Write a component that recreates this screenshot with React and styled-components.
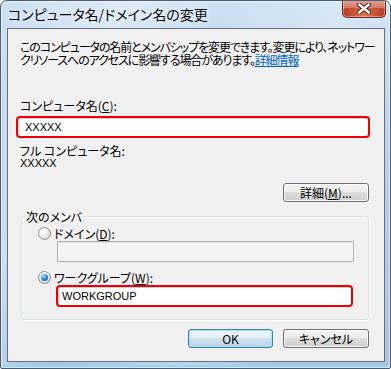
import React from "react";
import styled, { createGlobalStyle } from "styled-components";

const GlobalStyle = createGlobalStyle`
  html, body {
    margin: 0;
    padding: 0;
    background: #ffffff;
  }
  body {
    width: 391px;
    height: 369px;
    overflow: hidden;
    font-family: "Noto Sans CJK JP", "Liberation Sans", sans-serif;
    font-feature-settings: "palt";
  }
`;

const Window = styled.div`
  box-sizing: border-box;
  width: 391px;
  height: 369px;
  display: flex;
  flex-direction: column;
  border: 1px solid #4b5c6e;
  border-radius: 7px 7px 2px 2px;
  background: linear-gradient(
      115deg,
      rgba(255, 255, 255, 0) 0%,
      rgba(255, 255, 255, 0.35) 22%,
      rgba(255, 255, 255, 0) 40%,
      rgba(255, 255, 255, 0.25) 62%,
      rgba(255, 255, 255, 0) 80%
    ),
    linear-gradient(180deg, #cde0f2 0%, #b9d1ea 40%, #a9c5e3 100%);
  box-shadow: inset 0 0 0 1px rgba(255, 255, 255, 0.55),
    inset 0 -2px 0 #8fd6f2;
  overflow: hidden;
`;

const TitleBar = styled.div`
  height: 27px;
  flex: none;
  display: flex;
  align-items: flex-start;
  padding-left: 7px;
`;

const Title = styled.div`
  margin-top: 4px;
  font-size: 14px;
  line-height: 18px;
  color: #0b0b0b;
  white-space: nowrap;
  text-shadow: 0 0 6px rgba(255, 255, 255, 0.9);
`;

const CloseButton = styled.div`
  margin-left: auto;
  margin-right: 4px;
  margin-top: -1px;
  width: 44px;
  height: 18px;
  box-sizing: border-box;
  display: flex;
  align-items: center;
  justify-content: center;
  border: 1px solid #6b2a1d;
  border-top: none;
  border-radius: 0 0 5px 5px;
  background: radial-gradient(
      ellipse at 50% 100%,
      rgba(255, 170, 120, 0.6) 0%,
      rgba(255, 170, 120, 0) 60%
    ),
    linear-gradient(180deg, #e4a597 0%, #d37863 45%, #c34a30 50%, #b8391f 100%);
  box-shadow: inset 0 0 0 1px rgba(255, 255, 255, 0.35);
`;

const Client = styled.div`
  flex: 1;
  margin: 0 5px 6px 6px;
  border: 1px solid #5f7182;
  background: #f0f0f0;
  display: flex;
  flex-direction: column;
  font-size: 12px;
  color: #000;
`;

const Description = styled.p`
  margin: 11px 0 0 12px;
  line-height: 13px;
  letter-spacing: -1.1px;
  white-space: nowrap;
`;

const Link = styled.a`
  color: #0066cc;
  text-decoration: underline;
`;

const Label = styled.div`
  margin: ${(p) => p.$top}px 0 0 12px;
  line-height: 13px;
  white-space: nowrap;
`;

const Value = styled.div`
  margin-left: 12px;
  line-height: 13px;
  font-family: "Liberation Sans", sans-serif;
  font-size: 11px;
`;

const Field = styled.div`
  box-sizing: border-box;
  height: ${(p) => p.$h}px;
  width: ${(p) => p.$w}px;
  margin: ${(p) => p.$top}px 0 0 ${(p) => p.$left}px;
  display: flex;
  align-items: center;
  padding-left: ${(p) => p.$pad}px;
  font-family: "Liberation Sans", sans-serif;
  font-size: 11px;
  border-radius: ${(p) => (p.$marked ? 4 : 1)}px;
  border: ${(p) =>
    p.$marked ? "2px solid #f20000" : "1px solid #aeb3b8"};
  background: ${(p) => (p.$marked ? "#ffffff" : "#f4f4f4")};
  box-shadow: ${(p) =>
    p.$marked ? "inset 1px 1px 0 #bcd0e3" : "inset 0 1px 0 #e3e3e3"};
`;

const ButtonRow = styled.div`
  display: flex;
  justify-content: flex-end;
  gap: 10px;
  margin: ${(p) => p.$top}px 15px 0 0;
`;

const Button = styled.div`
  box-sizing: border-box;
  width: ${(p) => p.$w}px;
  height: 19px;
  display: flex;
  align-items: center;
  justify-content: center;
  font-size: 12px;
  line-height: 1;
  border-radius: 3px;
  border: 1px solid ${(p) => (p.$default ? "#3c7fb1" : "#707070")};
  background: ${(p) =>
    p.$default
      ? "linear-gradient(180deg, #edf5fa 0%, #e2eef6 50%, #cfe2ee 50%, #bed6e6 100%)"
      : "linear-gradient(180deg, #f3f3f3 0%, #ebebeb 50%, #dddddd 50%, #cfcfcf 100%)"};
  box-shadow: inset 0 0 0 1px
    ${(p) => (p.$default ? "rgba(160, 220, 250, 0.9)" : "rgba(255, 255, 255, 0.8)")};
`;

const Group = styled.fieldset`
  margin: 8px 15px 0 13px;
  padding: 3px 0 12px 0;
  border: 1px solid #d5dfe5;
  border-radius: 3px;
  box-shadow: inset 1px 1px 0 #ffffff, 1px 1px 0 #ffffff;
`;

const Legend = styled.legend`
  margin-left: 3px;
  padding: 0 1px;
  line-height: 13px;
  font-size: 12px;
`;

const RadioRow = styled.div`
  display: flex;
  align-items: center;
  height: 15px;
  margin: ${(p) => p.$top}px 0 0 16px;
  gap: 3px;
  white-space: nowrap;
`;

const Radio = styled.span`
  box-sizing: border-box;
  width: 13px;
  height: 13px;
  border-radius: 50%;
  border: 1px solid #8f8f8f;
  display: flex;
  align-items: center;
  justify-content: center;
  background: radial-gradient(circle at 35% 30%, #ffffff 0%, #f1f1f1 40%, #c9c9c9 100%);

  &::after {
    content: "";
    display: ${(p) => (p.$checked ? "block" : "none")};
    width: 7px;
    height: 7px;
    border-radius: 50%;
    background: radial-gradient(circle at 35% 30%, #a5e6ff 0%, #2b8bd0 50%, #0a4c85 100%);
  }
`;

const Mnemonic = styled.span`
  text-decoration: underline;
`;

function CloseGlyph() {
  return (
    <svg width="16" height="11" viewBox="0 0 16 11">
      <path d="M3 1.5 L13 9.5 M13 1.5 L3 9.5" stroke="#3a1d18" strokeWidth="4.2" strokeLinecap="round" fill="none" />
      <path d="M3 1.5 L13 9.5 M13 1.5 L3 9.5" stroke="#ffffff" strokeWidth="2.4" strokeLinecap="round" fill="none" />
    </svg>
  );
}

export default function App() {
  return (
    <>
      <GlobalStyle />
      <Window>
        <TitleBar>
          <Title>コンピュータ名/ドメイン名の変更</Title>
          <CloseButton>
            <CloseGlyph />
          </CloseButton>
        </TitleBar>
        <Client>
          <Description>
            このコンピュータの名前とメンバシップを変更できます。変更により、ネットワー
            <br />
            クリソースへのアクセスに影響する場合があります。<Link href="#">詳細情報</Link>
          </Description>

          <Label $top={33}>
            コンピュータ名(<Mnemonic>C</Mnemonic>):
          </Label>
          <Field $marked $top={4} $left={8} $w={354} $h={22} $pad={7}>
            XXXXX
          </Field>

          <Label $top={6}>フル コンピュータ名:</Label>
          <Value>XXXXX</Value>

          <ButtonRow $top={13}>
            <Button $w={86}>
              詳細(<Mnemonic>M</Mnemonic>)...
            </Button>
          </ButtonRow>

          <Group>
            <Legend>次のメンバ</Legend>
            <RadioRow $top={0}>
              <Radio />
              <span>
                ドメイン(<Mnemonic>D</Mnemonic>):
              </span>
            </RadioRow>
            <Field $top={0} $left={35} $w={297} $h={21} $pad={4} />
            <RadioRow $top={8}>
              <Radio $checked />
              <span>
                ワークグループ(<Mnemonic>W</Mnemonic>):
              </span>
            </RadioRow>
            <Field $marked $top={0} $left={34} $w={297} $h={22} $pad={4}>
              WORKGROUP
            </Field>
          </Group>

          <ButtonRow $top={9}>
            <Button $default $w={85}>
              OK
            </Button>
            <Button $w={86}>キャンセル</Button>
          </ButtonRow>
        </Client>
      </Window>
    </>
  );
}
